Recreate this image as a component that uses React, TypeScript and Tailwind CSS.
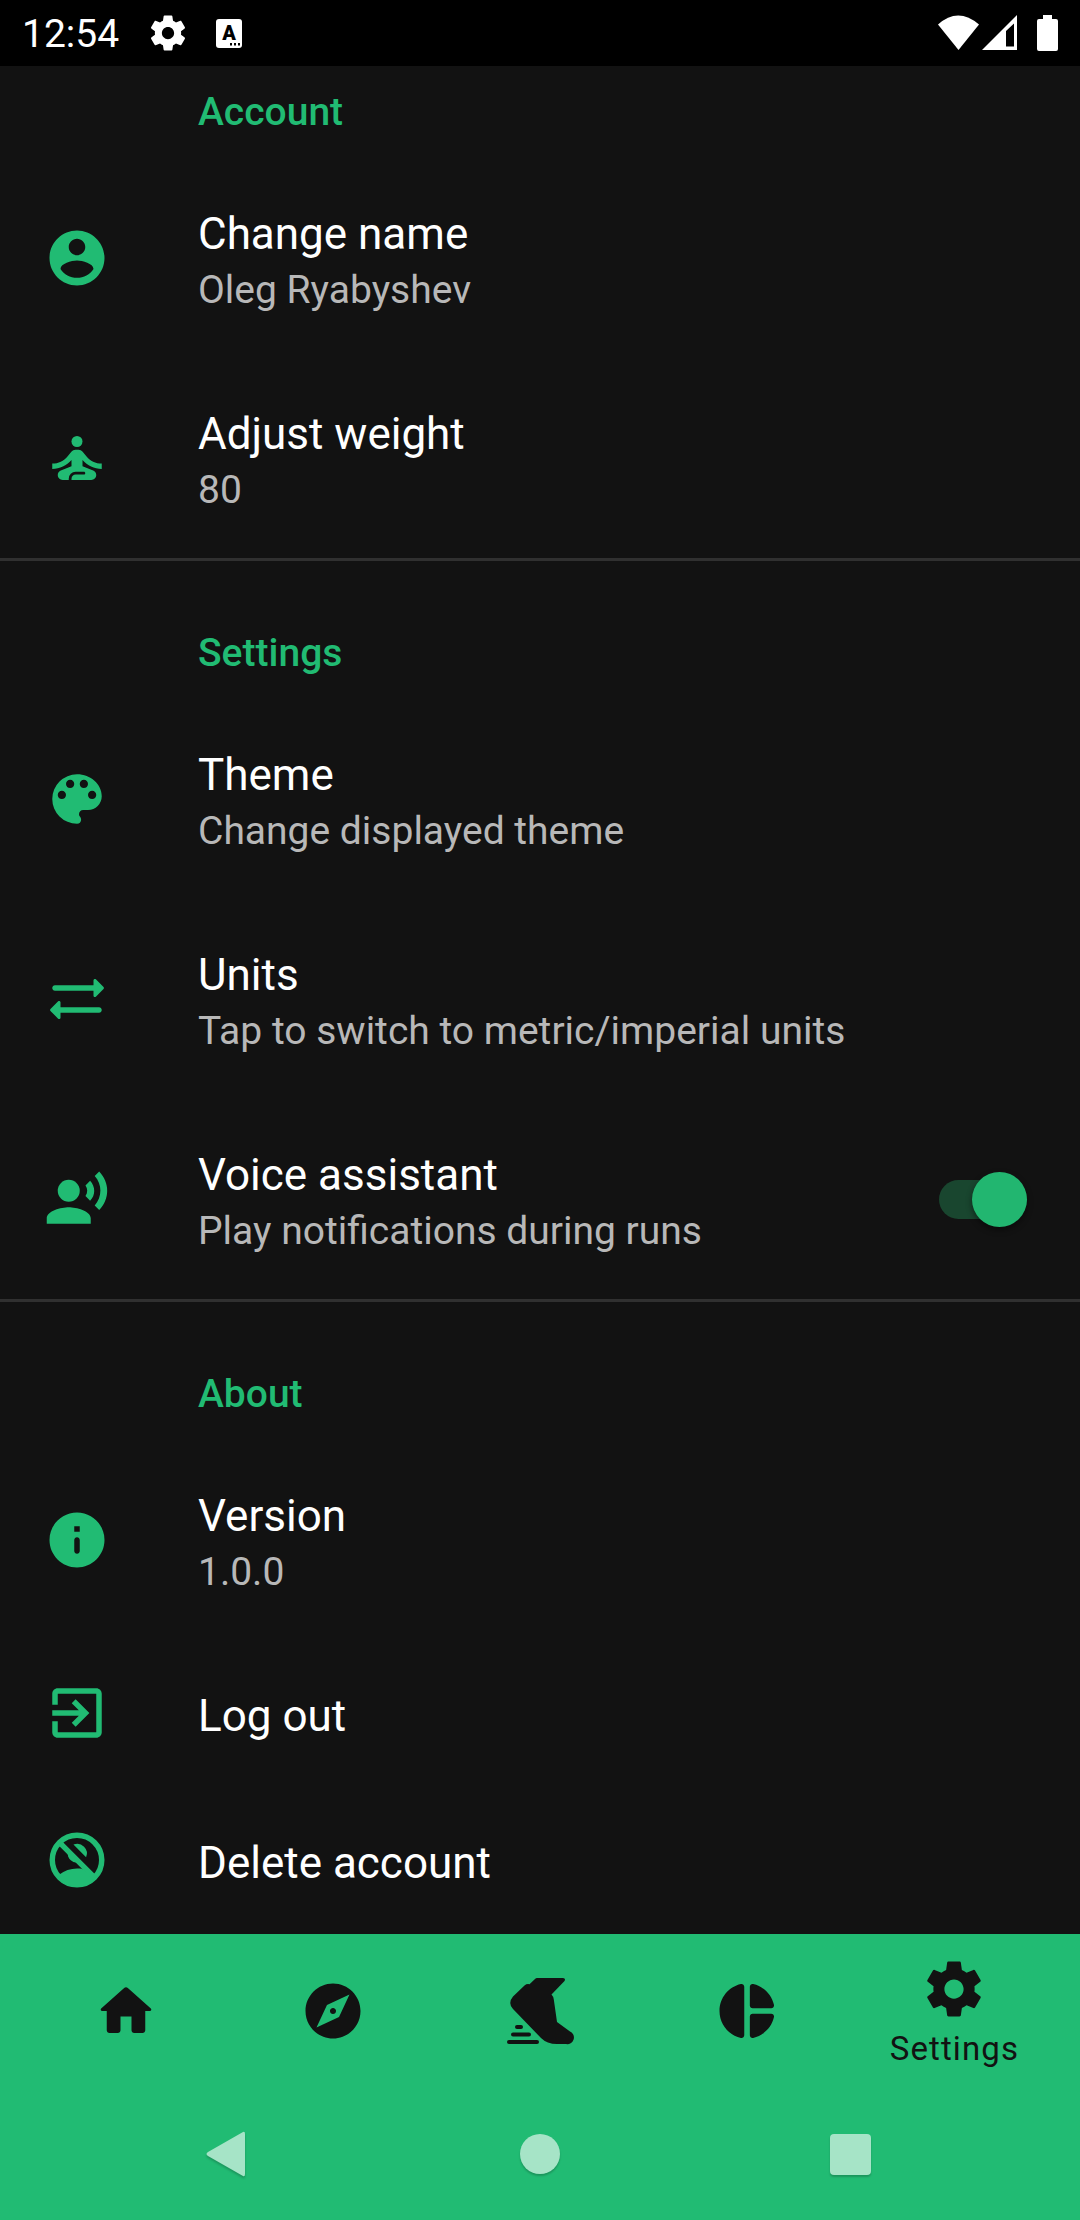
import type { ReactNode } from "react";
import { MdSelfImprovement, MdRecordVoiceOver } from "react-icons/md";

const GEAR =
  "M19.43 12.98c.04-.32.07-.64.07-.98s-.03-.66-.07-.98l2.11-1.65c.19-.15.24-.42.12-.64l-2-3.46c-.12-.22-.39-.3-.61-.22l-2.49 1c-.52-.4-1.08-.73-1.69-.98l-.38-2.65C14.46 2.18 14.25 2 14 2h-4c-.25 0-.46.18-.49.42l-.38 2.65c-.61.25-1.17.59-1.69.98l-2.49-1c-.23-.09-.49 0-.61.22l-2 3.46c-.13.22-.07.49.12.64l2.11 1.65c-.04.32-.07.65-.07.98s.03.66.07.98l-2.11 1.65c-.19.15-.24.42-.12.64l2 3.46c.12.22.39.3.61.22l2.49-1c.52.4 1.08.73 1.69.98l.38 2.65c.03.24.24.42.49.42h4c.25 0 .46-.18.49-.42l.38-2.65c.61-.25 1.17-.59 1.69-.98l2.49 1c.23.09.49 0 .61-.22l2-3.46c.12-.22.07-.49-.12-.64l-2.11-1.65zM12 15.5c-1.93 0-3.5-1.57-3.5-3.5s1.57-3.5 3.5-3.5 3.5 1.57 3.5 3.5-1.57 3.5-3.5 3.5z";
const ACCOUNT =
  "M12 2C6.48 2 2 6.48 2 12s4.48 10 10 10 10-4.48 10-10S17.52 2 12 2zm0 3c1.66 0 3 1.34 3 3s-1.34 3-3 3-3-1.34-3-3 1.34-3 3-3zm0 14.2c-2.5 0-4.71-1.28-6-3.22.03-1.99 4-3.08 6-3.08 1.99 0 5.97 1.09 6 3.08-1.29 1.94-3.5 3.22-6 3.22z";
const PALETTE =
  "M12 3a9 9 0 0 0 0 18c.83 0 1.5-.67 1.5-1.5 0-.39-.15-.74-.39-1.01-.23-.26-.38-.61-.38-.99 0-.83.67-1.5 1.5-1.5H16c2.76 0 5-2.24 5-5 0-4.42-4.03-8-9-8zm-5.5 9c-.83 0-1.5-.67-1.5-1.5S5.67 9 6.5 9 8 9.67 8 10.5 7.33 12 6.5 12zm3-4C8.67 8 8 7.33 8 6.5S8.67 5 9.5 5s1.5.67 1.5 1.5S10.33 8 9.5 8zm5 0c-.83 0-1.5-.67-1.5-1.5S13.67 5 14.5 5s1.5.67 1.5 1.5S15.33 8 14.5 8zm3 4c-.83 0-1.5-.67-1.5-1.5S16.67 9 17.5 9s1.5.67 1.5 1.5-.67 1.5-1.5 1.5z";
const SWAP =
  "M21.65 7.65l-2.79-2.79c-.32-.32-.86-.1-.86.35V7H4c-.55 0-1 .45-1 1s.45 1 1 1h14v1.79c0 .45.54.67.85.35l2.79-2.79c.2-.19.2-.51.01-.7zM2.35 16.35l2.79 2.79c.32.32.86.1.86-.35V17h14c.55 0 1-.45 1-1s-.45-1-1-1H6v-1.79c0-.45-.54-.67-.85-.35l-2.79 2.79c-.2.19-.2.51-.01.7z";
const INFO =
  "M12 2C6.48 2 2 6.48 2 12s4.48 10 10 10 10-4.48 10-10S17.52 2 12 2zm0 15c-.55 0-1-.45-1-1v-4c0-.55.45-1 1-1s1 .45 1 1v4c0 .55-.45 1-1 1zm1-8h-2V7h2v2z";
const EXIT =
  "M10.09 15.59L11.5 17l5-5-5-5-1.41 1.41L12.67 11H3v2h9.67l-2.58 2.59zM19 3H5c-1.11 0-2 .9-2 2v4h2V5h14v14H5v-4H3v4c0 1.1.89 2 2 2h14c1.1 0 2-.9 2-2V5c0-1.1-.9-2-2-2z";
const HOME =
  "M10 19v-5h4v5c0 .55.45 1 1 1h3c.55 0 1-.45 1-1v-7h1.7c.46 0 .68-.57.33-.87L12.67 3.6c-.38-.34-.96-.34-1.34 0l-8.36 7.53c-.34.3-.13.87.33.87H5v7c0 .55.45 1 1 1h3c.55 0 1-.45 1-1z";
const EXPLORE =
  "M12 10.9c-.61 0-1.1.49-1.1 1.1s.49 1.1 1.1 1.1c.61 0 1.1-.49 1.1-1.1s-.49-1.1-1.1-1.1zM12 2C6.48 2 2 6.48 2 12s4.48 10 10 10 10-4.48 10-10S17.52 2 12 2zm2.19 12.19L6 18l3.81-8.19L18 6l-3.81 8.19z";
const PIE =
  "M11 3.18v17.64c0 .64-.59 1.12-1.21.98C5.32 20.8 2 16.79 2 12s3.32-8.8 7.79-9.8c.62-.14 1.21.34 1.21.98zm2.03 0v6.81c0 .55.45 1 1 1h6.79c.64 0 1.12-.59.98-1.22-.85-3.76-3.8-6.72-7.55-7.57-.63-.14-1.22.34-1.22.98zm0 10.83v6.81c0 .64.59 1.12 1.22.98 3.76-.85 6.71-3.82 7.56-7.58.14-.62-.35-1.22-.98-1.22h-6.79c-.56.01-1.01.46-1.01 1.01z";

function Glyph({ d, className = "size-[66px]" }: { d: string; className?: string }) {
  return (
    <svg viewBox="0 0 24 24" className={className} fill="currentColor">
      <path d={d} />
    </svg>
  );
}

function NoAccount() {
  return (
    <svg viewBox="0 0 24 24" className="size-[66px]" fill="none">
      <circle cx="12" cy="12" r="9" stroke="currentColor" strokeWidth="2" />
      <path d="M5.6 17.3C7.4 15.9 9.6 15.1 12 15.1c.6 0 1.2 0 1.8.1L18.6 18 17 20.5 12 21.8 7 20.5z" fill="currentColor" />
      <path d="M10.7 6.4A3.5 3.5 0 0 1 15.3 11z" fill="currentColor" />
      <path d="M8.6 9.2A3.5 3.5 0 0 0 12.4 13z" fill="currentColor" />
      <path d="M5.4 5.4L18.6 18.6" stroke="currentColor" strokeWidth="2" />
    </svg>
  );
}

function Shoe() {
  return (
    <svg viewBox="0 0 80 80" className="size-20" fill="currentColor">
      <path d="M37 7h26q3 .5 1.500 3L51.500 23.500q2 2 2.300 5L57 51l13 9.500a6.600 6.600 0 0 1-4 12.500H57q-10 0-16-6L13 38q-5.500-6 0-12.500l11.500-11q2.500-2 5-1.200L35 8q1-1 2-1z" />
      <rect x="15" y="54" width="8" height="4" rx="2" />
      <rect x="11" y="61.500" width="20" height="4" rx="2" />
      <rect x="7" y="69" width="32" height="4" rx="2" />
    </svg>
  );
}

function Header({ children }: { children: ReactNode }) {
  return (
    <h2 className="flex h-[138px] items-center pt-[47px] pl-[198px] text-[39px] leading-[45px] font-medium text-[#21bb73]">
      {children}
    </h2>
  );
}

function Row({ icon, title, note, end }: { icon: ReactNode; title: string; note?: string; end?: ReactNode }) {
  return (
    <div className={note ? "flex h-[200px] items-center px-11" : "flex h-[146.5px] items-center px-11"}>
      <div className="w-[154px] text-[66px] text-[#21bb73]">{icon}</div>
      <div className={note ? "flex-1 pt-2" : "flex-1 pt-[6px]"}>
        <div className="text-[44px] leading-[52px] text-white">{title}</div>
        {note && <div className="pt-1 text-[39px] leading-[52px] text-[#b8b8b8]">{note}</div>}
      </div>
      {end}
    </div>
  );
}

function Toggle() {
  return (
    <div className="mr-[9px] flex h-[39px] w-[88px] items-center justify-end rounded-full bg-[#19462f]">
      <div className="size-[55px] shrink-0 rounded-full bg-[#22b670] shadow-[0_3px_6px_rgba(0,0,0,0.45)]" />
    </div>
  );
}

const Divider = () => <div className="h-[3px] bg-[#303030]" />;

export default function App() {
  return (
    <div className="flex h-[2220px] w-[1080px] flex-col overflow-hidden bg-[#121212] font-[Roboto,sans-serif]">
      <header className="flex h-[66px] shrink-0 items-center bg-black text-white">
        <span className="ml-[22px] pt-[3px] text-[39px] leading-[45px]">12:54</span>
        <Glyph d={GEAR} className="ml-[28px] size-[42px]" />
        <span className="relative ml-[27px] flex h-[29px] w-[26px] items-center justify-center rounded-[3px] bg-white text-[20px] leading-none font-black text-black">
          A
          <svg viewBox="0 0 12 3" className="absolute right-[1px] bottom-[2px] h-[3px] w-3" fill="black">
            <path d="M1 0h2v2.500H1zM5 0h2v2.500H5zM9 0h2v2.500H9z" />
          </svg>
        </span>
        <svg viewBox="0 0 122 38" className="mr-[21px] ml-auto h-[38px] w-[122px]" fill="white">
          <path d="M1 10.500Q21-7.500 42 10.500L21.500 36z" />
          <path fillRule="evenodd" d="M45 36 80 1v35zM69 17v15.500h8V9.500z" />
          <path d="M106 1h9v4h4q2 0 2 2v28q0 2-2 2h-17q-2 0-2-2V7q0-2 2-2h4z" />
        </svg>
      </header>

      <main className="-mt-[46px] h-[1914px] shrink-0">
        <Header>Account</Header>
        <Row icon={<Glyph d={ACCOUNT} />} title="Change name" note="Oleg Ryabyshev" />
        <Row icon={<MdSelfImprovement />} title="Adjust weight" note="80" />
        <Divider />
        <Header>Settings</Header>
        <Row icon={<Glyph d={PALETTE} />} title="Theme" note="Change displayed theme" />
        <Row icon={<Glyph d={SWAP} />} title="Units" note="Tap to switch to metric/imperial units" />
        <Row icon={<MdRecordVoiceOver />} title="Voice assistant" note="Play notifications during runs" end={<Toggle />} />
        <Divider />
        <Header>About</Header>
        <Row icon={<Glyph d={INFO} />} title="Version" note="1.0.0" />
        <Row icon={<Glyph d={EXIT} />} title="Log out" />
        <Row icon={<NoAccount />} title="Delete account" />
      </main>

      <footer className="shrink-0 bg-[#21bb73] text-[#121212]">
        <nav className="grid h-[154px] grid-cols-5 place-items-center px-[22px]">
          <Glyph d={HOME} />
          <Glyph d={EXPLORE} />
          <Shoe />
          <Glyph d={PIE} />
          <div className="flex h-full flex-col items-center pt-[22px]">
            <Glyph d={GEAR} />
            <span className="pt-[7px] text-[33px] leading-[39px] tracking-[1.1px]">Settings</span>
          </div>
        </nav>
        <div className="flex h-[132px] items-center pl-[206px]">
          <svg viewBox="0 0 40 48" className="h-12 w-10 drop-shadow-[0_2px_1px_rgba(0,0,0,0.2)]" fill="#a6e4c7">
            <path d="M37 2q2-1 2 2v40q0 3-2 2L2 26q-3-2 0-4z" />
          </svg>
          <div className="ml-[274px] size-10 rounded-full bg-[#a6e4c7] shadow-[0_2px_2px_rgba(0,0,0,0.2)]" />
          <div className="ml-[270px] size-[41px] rounded-[4px] bg-[#a6e4c7] shadow-[0_2px_2px_rgba(0,0,0,0.2)]" />
        </div>
      </footer>
    </div>
  );
}
